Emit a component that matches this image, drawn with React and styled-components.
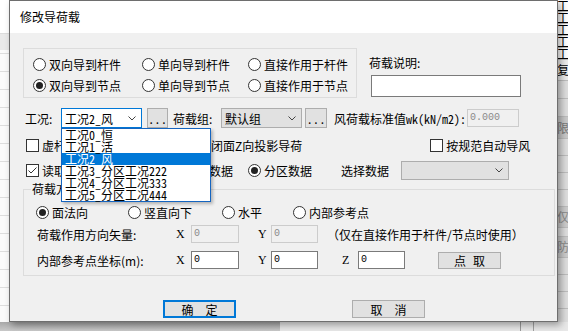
import React from "react";
import styled, { createGlobalStyle } from "styled-components";

const CJK = `"Noto Sans CJK SC", "Noto Sans", sans-serif`;
const MONO_CJK = `"Noto Sans Mono CJK SC", "Noto Sans CJK SC", monospace`;

const GlobalStyle = createGlobalStyle`
  body {
    margin: 0;
    font-family: ${CJK};
    font-size: 12px;
    color: #000;
  }
`;

const Desktop = styled.div`
  position: relative;
  width: 568px;
  height: 331px;
  overflow: hidden;
  display: grid;
  grid-template-columns: 558px 10px;
  grid-template-rows: 322px 9px;
  background: #f3f3f3;
`;

const SheetLeft = styled.div`
  background: linear-gradient(
      #ffffff 0 33px,
      #dcdcdc 33px 34px,
      #e9e9e9 34px 50px,
      transparent 50px
    ),
    repeating-linear-gradient(#fafafa 0 17px, #dddddd 17px 18px);
`;

const SideStrip = styled.div`
  display: flex;
  flex-direction: column;
  overflow: hidden;
  background: #dcdcdc;
`;

const SideCell = styled.div`
  flex: none;
  height: ${(p) => p.$h}px;
  line-height: ${(p) => p.$h}px;
  background: ${(p) => p.$bg || "#dedede"};
  color: ${(p) => p.$c || "#000"};
  border-bottom: 1px solid #bdbdbd;
  white-space: nowrap;
  overflow: hidden;
  text-indent: -1px;
`;

const BottomStrip = styled.div`
  grid-column: 1 / -1;
  display: flex;
`;

const ScrollThumb = styled.div`
  width: 280px;
  background: linear-gradient(#a8a8a8, #c8c8c8);
`;

const ScrollTrack = styled.div`
  flex: 1;
  background: linear-gradient(
    to right,
    #e8e8e8 0 240px,
    #9a9a9a 240px 241px,
    #e8e8e8 241px 253px,
    #a0a0a0 253px 254px,
    #e8e8e8 254px
  );
`;

/* ---------- dialog ---------- */

const Dialog = styled.div`
  position: absolute;
  left: 9px;
  top: 0;
  width: 549px;
  height: 322px;
  box-sizing: border-box;
  border: 1px solid #6e6e6e;
  background: #f0f0f0;
  box-shadow: 3px 3px 7px rgba(0, 0, 0, 0.35);
  display: flex;
  flex-direction: column;
`;

const TitleBar = styled.div`
  flex: none;
  height: 32px;
  line-height: 32px;
  padding-left: 10px;
  background: #fff;
`;

const Body = styled.div`
  padding: 15px 0 0 13px;
`;

const TopSection = styled.div`
  display: flex;
  align-items: flex-start;
`;

const RadioGroupBox = styled.div`
  box-sizing: border-box;
  width: 334px;
  height: 50px;
  border: 1px solid #dcdcdc;
  padding: 5px 0 0 9px;
  display: grid;
  grid-template-columns: 109px 106px auto;
  grid-auto-rows: 21px;
`;

const Choice = styled.label`
  display: flex;
  align-items: center;
  gap: 3px;
  white-space: nowrap;
  margin-left: ${(p) => p.$ml || 0}px;
`;

const RadioDot = styled.span`
  flex: none;
  box-sizing: border-box;
  width: 13px;
  height: 13px;
  border: 1px solid #333;
  border-radius: 50%;
  background: #fff;
  display: flex;
  align-items: center;
  justify-content: center;
  &::after {
    content: "";
    width: 7px;
    height: 7px;
    border-radius: 50%;
    background: #222;
    display: ${(p) => (p.$on ? "block" : "none")};
  }
`;

const CheckBox = styled.span`
  flex: none;
  box-sizing: border-box;
  width: 13px;
  height: 13px;
  border: 1px solid #333;
  background: #fff;
  display: flex;
  align-items: center;
  justify-content: center;
`;

const DescCol = styled.div`
  margin-left: 12px;
  display: flex;
  flex-direction: column;
`;

const DescLabel = styled.div`
  margin-top: 6px;
  line-height: 18px;
`;

const TextBox = styled.div`
  margin: 3px 0 0 2px;
  width: 150px;
  height: 22px;
  box-sizing: border-box;
  border: 1px solid #7a7a7a;
  background: #fff;
`;

const Row = styled.div`
  display: flex;
  align-items: center;
  height: ${(p) => p.$h}px;
  margin-top: ${(p) => p.$mt || 0}px;
  padding-left: ${(p) => p.$pl || 0}px;
  white-space: nowrap;
`;

const Label = styled.span`
  flex: none;
  width: ${(p) => (p.$w ? `${p.$w}px` : "auto")};
  margin-left: ${(p) => p.$ml || 0}px;
  font-family: ${(p) => (p.$mono ? MONO_CJK : "inherit")};
`;

const Combo = styled.div`
  position: relative;
  flex: none;
  box-sizing: border-box;
  width: ${(p) => p.$w}px;
  height: ${(p) => p.$h || 20}px;
  margin-left: ${(p) => p.$ml || 0}px;
  border: 1px solid ${(p) => (p.$focus ? "#0078d7" : "#adadad")};
  background: ${(p) => (p.$focus ? "#fff" : "#e1e1e1")};
  padding: 0 5px 0 3px;
  display: flex;
  align-items: center;
  justify-content: space-between;
  font-family: ${MONO_CJK};
`;

const DropList = styled.ul`
  position: absolute;
  left: -1px;
  top: calc(100% + 1px);
  z-index: 2;
  margin: 0;
  padding: 0;
  list-style: none;
  width: 150px;
  box-sizing: border-box;
  border: 1px solid #1565c0;
  background: #fff;
  box-shadow: 2px 2px 3px rgba(0, 0, 0, 0.25);
`;

const DropItem = styled.li`
  height: 12px;
  line-height: 12px;
  padding-left: 3px;
  background: ${(p) => (p.$sel ? "#0078d7" : "transparent")};
  color: ${(p) => (p.$sel ? "#fff" : "#000")};
`;

const DotsButton = styled.div`
  flex: none;
  box-sizing: border-box;
  width: ${(p) => p.$w}px;
  height: 20px;
  margin-left: ${(p) => p.$ml}px;
  border: 1px solid #adadad;
  background: #e1e1e1;
  display: flex;
  align-items: center;
  justify-content: center;
  letter-spacing: 3px;
  padding-left: 3px;
`;

const Field = styled.div`
  flex: none;
  box-sizing: border-box;
  width: ${(p) => p.$w}px;
  height: 18px;
  margin-left: ${(p) => p.$ml || 0}px;
  border: 1px solid ${(p) => (p.$disabled ? "#cccccc" : "#7a7a7a")};
  background: ${(p) => (p.$disabled ? "#f0f0f0" : "#fff")};
  color: ${(p) => (p.$disabled ? "#8a8a8a" : "#000")};
  padding-left: 2px;
  font-family: "Liberation Mono", monospace;
  font-size: 10px;
  line-height: 16px;
`;

const GroupSet = styled.fieldset`
  margin: 2px 0 0 0;
  width: 532px;
  box-sizing: border-box;
  border: 1px solid #dcdcdc;
  padding: 0 0 6px 12px;
  min-inline-size: auto;
`;

const GroupLegend = styled.legend`
  margin-left: -5px;
  padding: 0 1px;
  line-height: 14px;
`;

const RadioRow = styled.div`
  display: grid;
  grid-template-columns: 92px 94px 71px auto;
  align-items: center;
  height: 20px;
  margin-top: 6px;
`;

const CoordRow = styled.div`
  display: grid;
  grid-template-columns: ${(p) => p.$cols};
  align-items: center;
  height: 18px;
  margin-top: ${(p) => p.$mt}px;
  white-space: nowrap;
`;

const CoordLabel = styled.span`
  padding-left: 1px;
`;

const Axis = styled.span`
  font-family: "Liberation Serif", serif;
  font-size: 12px;
`;

const Note = styled.span`
  padding-left: 9px;
`;

const PushButton = styled.div`
  flex: none;
  box-sizing: border-box;
  width: ${(p) => p.$w}px;
  height: ${(p) => p.$h}px;
  margin-left: ${(p) => p.$ml || 0}px;
  border: ${(p) => (p.$default ? "2px solid #0078d7" : "1px solid #adadad")};
  background: #e1e1e1;
  display: flex;
  align-items: center;
  justify-content: center;
  gap: ${(p) => p.$gap}px;
`;

const ButtonRow = styled.div`
  display: flex;
  margin-top: 24px;
`;

const Chevron = () => (
  <svg width="8" height="5" viewBox="0 0 8 5">
    <polyline points="0.5,0.5 4,4 7.5,0.5" fill="none" stroke="#444" strokeWidth="1" />
  </svg>
);

const Tick = () => (
  <svg width="11" height="11" viewBox="0 0 11 11">
    <polyline points="1.5,5.5 4,8 9.5,2.5" fill="none" stroke="#333" strokeWidth="1" />
  </svg>
);

const Radio = ({ on, ml, children }) => (
  <Choice $ml={ml}>
    <RadioDot $on={on} />
    {children}
  </Choice>
);

const Check = ({ on, ml, children }) => (
  <Choice $ml={ml}>
    <CheckBox>{on && <Tick />}</CheckBox>
    {children}
  </Choice>
);

const CASES = [
  "工况0_恒",
  "工况1_活",
  "工况2_风",
  "工况3_分区工况222",
  "工况4_分区工况333",
  "工况5_分区工况444",
];

const SIDE = [
  { h: 11, bg: "#fff", t: "工" },
  { h: 11, bg: "#fff", t: "工" },
  { h: 11, bg: "#fff", t: "工" },
  { h: 11, bg: "#fff", t: "工" },
  { h: 11, bg: "#fff", t: "工" },
  { h: 20, bg: "#ececec", t: "复" },
  { h: 17 },
  { h: 17 },
  { h: 21, bg: "#c9c9c9", c: "#7a7a7a", t: "限扌" },
  { h: 16 },
  { h: 16 },
  { h: 16 },
  { h: 16 },
  { h: 20, bg: "#cccccc", c: "#8a8a8a", t: "仅" },
  { h: 8 },
  { h: 20, bg: "#cccccc", c: "#8a8a8a", t: "防" },
  { h: 16 },
  { h: 16 },
  { h: 16 },
  { h: 16 },
];

export default function App() {
  return (
    <>
      <GlobalStyle />
      <Desktop>
        <SheetLeft />
        <SideStrip>
          {SIDE.map((s, i) => (
            <SideCell key={i} $h={s.h} $bg={s.bg} $c={s.c}>
              {s.t}
            </SideCell>
          ))}
        </SideStrip>
        <BottomStrip>
          <ScrollThumb />
          <ScrollTrack />
        </BottomStrip>

        <Dialog>
          <TitleBar>修改导荷载</TitleBar>
          <Body>
            <TopSection>
              <RadioGroupBox>
                <Radio>双向导到杆件</Radio>
                <Radio>单向导到杆件</Radio>
                <Radio>直接作用于杆件</Radio>
                <Radio on>双向导到节点</Radio>
                <Radio>单向导到节点</Radio>
                <Radio>直接作用于节点</Radio>
              </RadioGroupBox>
              <DescCol>
                <DescLabel>荷载说明:</DescLabel>
                <TextBox />
              </DescCol>
            </TopSection>

            <Row $h={20} $mt={10}>
              <Label $w={36} $ml={2}>工况:</Label>
              <Combo $w={81} $focus>
                <span>工况2_风</span>
                <Chevron />
                <DropList>
                  {CASES.map((c) => (
                    <DropItem key={c} $sel={c === "工况2_风"}>
                      {c}
                    </DropItem>
                  ))}
                </DropList>
              </Combo>
              <DotsButton $w={21} $ml={5}>...</DotsButton>
              <Label $w={48} $ml={5}>荷载组:</Label>
              <Combo $w={81}>
                <span>默认组</span>
                <Chevron />
              </Combo>
              <DotsButton $w={22} $ml={3}>...</DotsButton>
              <Label $w={133} $ml={7} $mono>
                风荷载标准值wk(kN/m2):
              </Label>
              <Field $w={52} $disabled>0.000</Field>
            </Row>

            <Row $h={18} $mt={8} $pl={3}>
              <Check>虚杆参与导荷</Check>
              <Check ml={57}>按封闭面Z向投影导荷</Check>
              <Check ml={128}>按规范自动导风</Check>
            </Row>

            <Row $h={19} $mt={7} $pl={3}>
              <Check on>读取风荷载</Check>
              <Radio ml={67}>整体数据</Radio>
              <Radio ml={15} on>
                分区数据
              </Radio>
              <Label $ml={29}>选择数据</Label>
              <Combo $w={108} $h={19} $ml={12}>
                <span />
                <Chevron />
              </Combo>
            </Row>

            <GroupSet>
              <GroupLegend>荷载方向</GroupLegend>
              <RadioRow>
                <Radio on>面法向</Radio>
                <Radio>竖直向下</Radio>
                <Radio>水平</Radio>
                <Radio>内部参考点</Radio>
              </RadioRow>
              <CoordRow $mt={3} $cols="140px 15px 48px 19px 13px 47px auto">
                <CoordLabel>荷载作用方向矢量:</CoordLabel>
                <Axis>X</Axis>
                <Field $w={48} $disabled>0</Field>
                <span />
                <Axis>Y</Axis>
                <Field $w={47} $disabled>0</Field>
                <Note>（仅在直接作用于杆件/节点时使用）</Note>
              </CoordRow>
              <CoordRow
                $mt={8}
                $cols="140px 15px 48px 19px 13px 47px 24px 16px 47px 33px 63px"
              >
                <CoordLabel>内部参考点坐标(m):</CoordLabel>
                <Axis>X</Axis>
                <Field $w={48}>0</Field>
                <span />
                <Axis>Y</Axis>
                <Field $w={47}>0</Field>
                <span />
                <Axis>Z</Axis>
                <Field $w={47}>0</Field>
                <span />
                <PushButton $w={63} $h={17} $gap={7}>
                  <span>点</span>
                  <span>取</span>
                </PushButton>
              </CoordRow>
            </GroupSet>

            <ButtonRow>
              <PushButton $w={73} $h={18} $ml={140} $gap={12} $default>
                <span>确</span>
                <span>定</span>
              </PushButton>
              <PushButton $w={73} $h={18} $ml={116} $gap={12}>
                <span>取</span>
                <span>消</span>
              </PushButton>
            </ButtonRow>
          </Body>
        </Dialog>
      </Desktop>
    </>
  );
}
